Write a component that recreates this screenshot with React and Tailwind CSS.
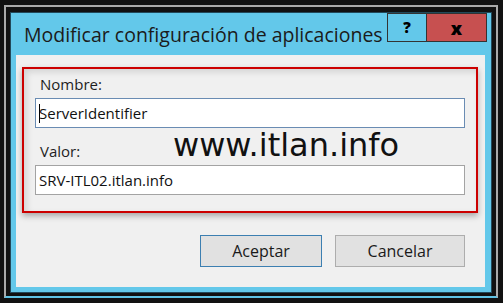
import { useState } from 'react'

const ui = { fontFamily: '"Open Sans", "Noto Sans", sans-serif' }

const TextBox = ({ value, focused }) => (
  <div
    className={`h-[30px] w-[430px] bg-white flex items-center pl-[3px] text-[15px] text-[#111] border ${
      focused ? 'border-[#6a8cb3]' : 'border-[#a3a3a3]'
    }`}
  >
    {focused && <span className="w-px h-[19px] bg-black -mr-px" />}
    <span className="leading-none">{value}</span>
  </div>
)

const DlgButton = ({ children, primary, width }) => (
  <button
    type="button"
    className={`h-[32px] ${width} bg-[#e1e1e1] text-[16px] text-[#1a1a1a] border ${
      primary ? 'border-[#3c7fb1]' : 'border-[#adadad]'
    }`}
  >
    {children}
  </button>
)

export default function App() {
  const [form] = useState({
    nombre: 'ServerIdentifier',
    valor: 'SRV-ITL02.itlan.info'
  })

  return (
    <div className="w-[503px] h-[303px] bg-[#111111] pt-[5px] pl-[4px]" style={ui}>
      {/* screen frame */}
      <div className="w-[494px] h-[293px] border-t-2 border-x-2 border-t-[#a9a9a9] border-x-[#a9a9a9] border-b-2 border-b-[#5fc2e4] pt-[5px] pl-[4px]">
        {/* window */}
        <div className="w-[482px] h-[281px] border border-[#22495a] bg-[#63c8ea] flex flex-col">
          {/* title bar */}
          <div className="h-[42px] flex items-start">
            <div className="flex-1 pl-[13px] pt-[10px] text-[19.5px] leading-[24px] text-[#1b1b1b] whitespace-nowrap">
              Modificar configuración de aplicaciones
            </div>
            <div className="flex mr-[4px]">
              <div className="w-[39px] h-[29px] border border-[#333] border-r-0 flex items-center justify-center font-extrabold text-[15px] text-black">
                ?
              </div>
              <div className="w-[61px] h-[29px] border border-[#333] bg-[#c75050] flex items-center justify-center font-extrabold text-[18px] leading-none text-black">
                x
              </div>
            </div>
          </div>

          {/* client area */}
          <div className="relative mx-[5px] w-[469px] h-[232px] bg-[#f0f0f0] pt-[12px] pl-[6px]">
            <div className="w-[456px] border-2 border-[#cc0000] pt-[5px] pb-[16px] px-[11px] shadow-[0_3px_6px_rgba(0,0,0,0.3),inset_3px_3px_6px_rgba(0,0,0,0.12)]">
              <div className="pl-[5px] text-[15px] leading-[20px] text-[#1e1e1e]">Nombre:</div>
              <div className="mt-[4px]">
                <TextBox value={form.nombre} focused />
              </div>
              <div className="mt-[13px] pl-[5px] text-[15px] leading-[20px] text-[#1e1e1e]">Valor:</div>
              <div className="mt-[4px]">
                <TextBox value={form.valor} />
              </div>
            </div>

            <div className="flex justify-end gap-[13px] pr-[20px] mt-[22px]">
              <DlgButton primary width="w-[122px]">Aceptar</DlgButton>
              <DlgButton width="w-[130px]">Cancelar</DlgButton>
            </div>

            {/* watermark */}
            <div
              className="absolute left-[157px] top-[74px] text-[32px] leading-none text-[#111]"
              style={{ fontFamily: '"DejaVu Sans", sans-serif' }}
            >
              www.itlan.info
            </div>
          </div>
        </div>
      </div>
    </div>
  )
}
